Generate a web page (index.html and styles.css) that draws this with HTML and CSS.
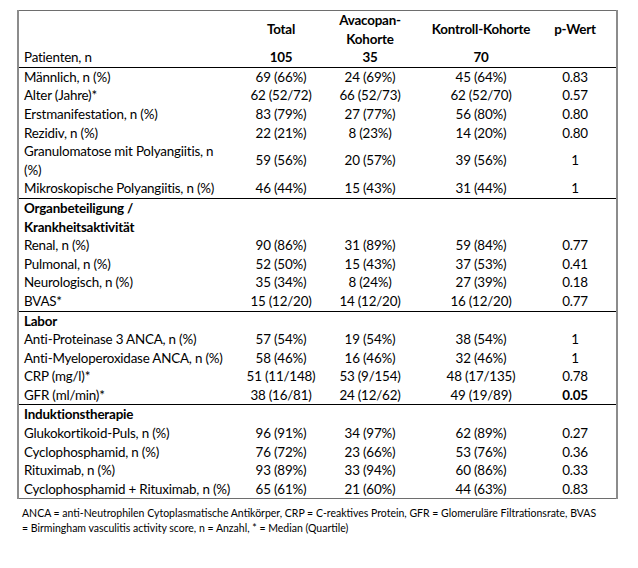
FILE: index.html
```html
<!DOCTYPE html>
<html lang="de">
<head>
<meta charset="utf-8">
<title>Patientencharakteristika</title>
<link rel="stylesheet" href="styles.css">
</head>
<body>
<div class="page">
  <table class="tbl">
    <colgroup>
      <col class="c-label"><col class="c-total"><col class="c-ava"><col class="c-kon"><col class="c-p">
    </colgroup>
    <thead>
      <tr class="h1">
        <th class="lbl"></th>
        <th>Total</th>
        <th>Avacopan-<br>Kohorte</th>
        <th>Kontroll-Kohorte</th>
        <th class="pv">p-Wert</th>
      </tr>
      <tr class="h2">
        <td class="lbl">Patienten, n</td>
        <th>105</th>
        <th>35</th>
        <th>70</th>
        <th class="pv"></th>
      </tr>
    </thead>
    <tbody>
      <tr><td class="lbl">Männlich, n (%)</td><td>69 (66%)</td><td>24 (69%)</td><td>45 (64%)</td><td class="pv">0.83</td></tr>
      <tr><td class="lbl">Alter (Jahre)*</td><td>62 (52/72)</td><td>66 (52/73)</td><td>62 (52/70)</td><td class="pv">0.57</td></tr>
      <tr><td class="lbl">Erstmanifestation, n (%)</td><td>83 (79%)</td><td>27 (77%)</td><td>56 (80%)</td><td class="pv">0.80</td></tr>
      <tr><td class="lbl">Rezidiv, n (%)</td><td>22 (21%)</td><td>8 (23%)</td><td>14 (20%)</td><td class="pv">0.80</td></tr>
      <tr><td class="lbl">Granulomatose mit Polyangiitis, n<br>(%)</td><td>59 (56%)</td><td>20 (57%)</td><td>39 (56%)</td><td class="pv">1</td></tr>
      <tr><td class="lbl">Mikroskopische Polyangiitis, n (%)</td><td>46 (44%)</td><td>15 (43%)</td><td>31 (44%)</td><td class="pv">1</td></tr>
    </tbody>
    <tbody class="grp">
      <tr><td class="lbl sec">Organbeteiligung /<br>Krankheitsaktivität</td><td></td><td></td><td></td><td class="pv"></td></tr>
      <tr><td class="lbl">Renal, n (%)</td><td>90 (86%)</td><td>31 (89%)</td><td>59 (84%)</td><td class="pv">0.77</td></tr>
      <tr><td class="lbl">Pulmonal, n (%)</td><td>52 (50%)</td><td>15 (43%)</td><td>37 (53%)</td><td class="pv">0.41</td></tr>
      <tr><td class="lbl">Neurologisch, n (%)</td><td>35 (34%)</td><td>8 (24%)</td><td>27 (39%)</td><td class="pv">0.18</td></tr>
      <tr><td class="lbl">BVAS*</td><td>15 (12/20)</td><td>14 (12/20)</td><td>16 (12/20)</td><td class="pv">0.77</td></tr>
    </tbody>
    <tbody class="grp">
      <tr><td class="lbl sec">Labor</td><td></td><td></td><td></td><td class="pv"></td></tr>
      <tr><td class="lbl">Anti-Proteinase 3 ANCA, n (%)</td><td>57 (54%)</td><td>19 (54%)</td><td>38 (54%)</td><td class="pv">1</td></tr>
      <tr><td class="lbl">Anti-Myeloperoxidase ANCA, n (%)</td><td>58 (46%)</td><td>16 (46%)</td><td>32 (46%)</td><td class="pv">1</td></tr>
      <tr><td class="lbl">CRP (mg/l)*</td><td>51 (11/148)</td><td>53 (9/154)</td><td>48 (17/135)</td><td class="pv">0.78</td></tr>
      <tr><td class="lbl">GFR (ml/min)*</td><td>38 (16/81)</td><td>24 (12/62)</td><td>49 (19/89)</td><td class="pv sig">0.05</td></tr>
    </tbody>
    <tbody class="grp">
      <tr><td class="lbl sec">Induktionstherapie</td><td></td><td></td><td></td><td class="pv"></td></tr>
      <tr><td class="lbl">Glukokortikoid-Puls, n (%)</td><td>96 (91%)</td><td>34 (97%)</td><td>62 (89%)</td><td class="pv">0.27</td></tr>
      <tr><td class="lbl">Cyclophosphamid, n (%)</td><td>76 (72%)</td><td>23 (66%)</td><td>53 (76%)</td><td class="pv">0.36</td></tr>
      <tr><td class="lbl">Rituximab, n (%)</td><td>93 (89%)</td><td>33 (94%)</td><td>60 (86%)</td><td class="pv">0.33</td></tr>
      <tr><td class="lbl">Cyclophosphamid + Rituximab, n (%)</td><td>65 (61%)</td><td>21 (60%)</td><td>44 (63%)</td><td class="pv">0.83</td></tr>
    </tbody>
  </table>
  <p class="note">ANCA = anti-Neutrophilen Cytoplasmatische Antikörper, CRP = C-reaktives Protein, GFR = Glomeruläre Filtrationsrate, BVAS<br>= Birmingham vasculitis activity score, n = Anzahl, * = Median (Quartile)</p>
</div>
</body>
</html>
```

FILE: styles.css
```css
html, body {
  margin: 0;
  padding: 0;
  background: #fff;
}

body {
  font-family: "Lato", "Open Sans", sans-serif;
  color: #000;
}

.page {
  padding: 10px 0 0 17px;
}

.tbl {
  border-collapse: collapse;
  table-layout: fixed;
  width: 599px;
  font-size: 13.4px;
  letter-spacing: -0.2px;
  line-height: 18.6px;
  border-top: 1px solid #6e6e6e;
  border-bottom: 1px solid #6e6e6e;
  border-left: 2px solid #8c8c8c;
  border-right: 2px solid #8c8c8c;
}

.c-label { width: 220px; }
.c-total { width: 86px; }
.c-ava { width: 92px; }
.c-kon { width: 130px; }
.c-p { width: 71px; }

.tbl th,
.tbl td {
  padding: 0;
  text-align: center;
  vertical-align: middle;
  font-weight: 400;
  white-space: nowrap;
}

.tbl th {
  font-weight: 700;
}

.tbl .lbl {
  text-align: left;
  padding-left: 5px;
}

.tbl .pv {
  padding-right: 12px;
}

.tbl .sec,
.tbl .sig {
  font-weight: 700;
}

.tbl thead {
  border-bottom: 1px solid #000;
}

.tbl .grp {
  border-top: 1px solid #000;
}

.note {
  margin: 7px 0 0 5px;
  font-size: 10.5px;
  line-height: 14.5px;
  white-space: nowrap;
}
```
